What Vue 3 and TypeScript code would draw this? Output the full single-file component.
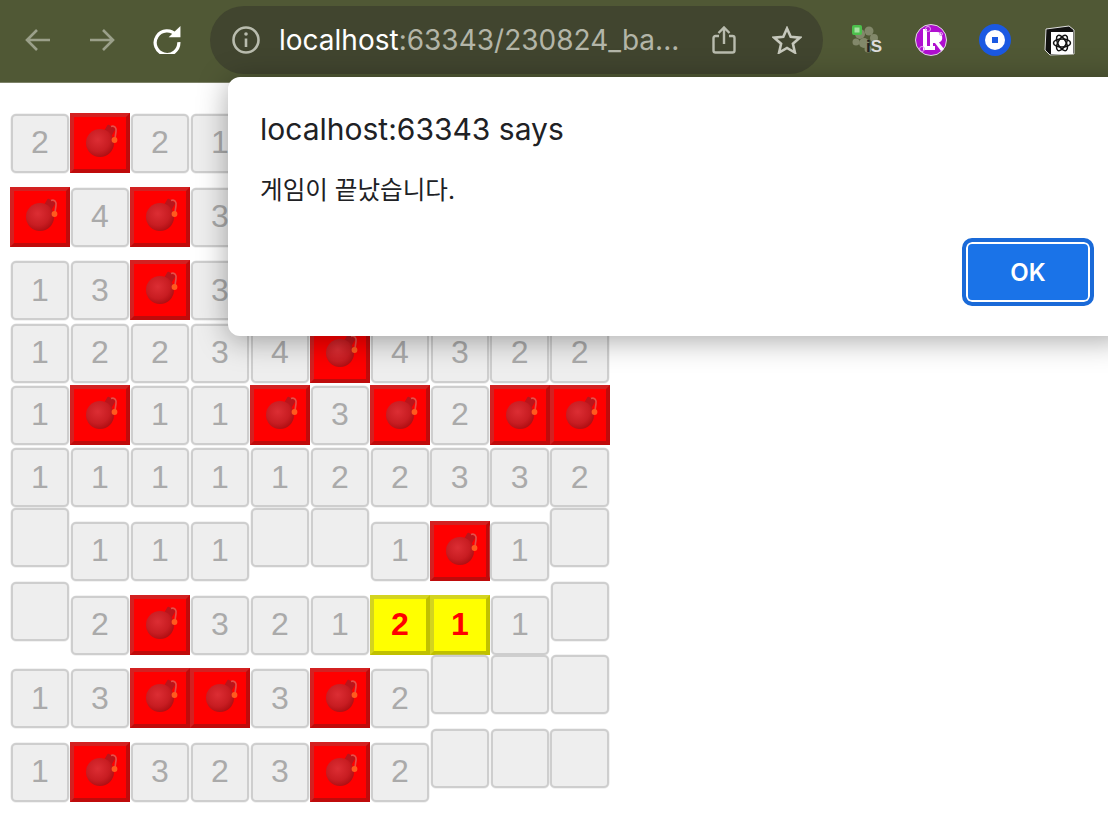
<template>
  <div class="page">
    <header class="toolbar">
      <nav class="nav">
        <svg class="nav-icon nav-icon--off" viewBox="0 0 26 26"><path d="M25 13H2M12 3 2 13l10 10" /></svg>
        <svg class="nav-icon nav-icon--off" viewBox="0 0 26 26"><path d="M1 13h23M14 3l10 10-10 10" /></svg>
        <svg class="nav-icon nav-icon--reload" viewBox="0 0 26 26">
          <path d="M21.5 8.5A11 11 0 1 0 24 15" />
          <path class="solid" d="M14.5 10.500 25.500 0v10.500z" />
        </svg>
      </nav>
      <div class="omnibox">
        <svg class="info" viewBox="0 0 28 28">
          <circle cx="14" cy="14" r="12.5" />
          <path d="M14 12.5V21" />
          <circle class="solid" cx="14" cy="8" r="1.8" />
        </svg>
        <span class="url"><b>localhost</b>:63343/230824_ba...</span>
        <svg class="share" viewBox="0 0 24 28">
          <path d="M7 10H3.5A2 2 0 0 0 1.500 12v12.500a2 2 0 0 0 2 2h17a2 2 0 0 0 2-2V12a2 2 0 0 0-2-2H17" />
          <path d="M12 18V2M6.500 7 12 1.500 17.500 7" />
        </svg>
        <svg class="star" viewBox="0 0 30 28">
          <path d="M15 2.500 18.700 10.800l9 .9-6.800 6 2 8.800L15 21.900l-7.900 4.600 2-8.800-6.800-6 9-.9z" />
        </svg>
      </div>
      <div class="extensions">
        <svg class="ext" viewBox="0 0 32 32">
          <g fill="#8f9478" opacity="0.8">
            <circle cx="9" cy="10" r="5" />
            <circle cx="18" cy="7" r="4.500" />
            <circle cx="23" cy="14" r="4" />
            <circle cx="13" cy="19" r="5" />
            <circle cx="5" cy="18" r="3.500" />
            <circle cx="17" cy="25" r="3.500" />
          </g>
          <rect x="1" y="1" width="10" height="10" rx="2" fill="#4cc04c" />
          <rect x="3.500" y="3.500" width="5" height="5" fill="#a6e0a0" />
          <text x="15" y="28" class="ext-text"><tspan class="ext-dark">i</tspan>S</text>
        </svg>
        <svg class="ext" viewBox="0 0 32 32">
          <circle cx="16" cy="16" r="15.500" fill="#b00fd0" stroke="#ddd" />
          <path d="M8 5h4v17h8v4H8z" fill="#fff" />
          <path d="M15 8h7a5.500 5.500 0 0 1 2 10.500L29 25l-3 2-6-8h-2v3h-3z" fill="#fff" />
          <g fill="none" stroke="#e0a0f0">
            <circle cx="7" cy="25" r="2.500" />
            <circle cx="13" cy="5" r="2.500" />
            <circle cx="26" cy="10" r="1.500" />
          </g>
        </svg>
        <svg class="ext" viewBox="0 0 32 32">
          <circle cx="16" cy="16" r="16" fill="#1b59e2" />
          <circle cx="16" cy="16" r="10" fill="#fff" />
          <rect x="13" y="13" width="6" height="6" fill="#1b59e2" />
        </svg>
        <svg class="ext" viewBox="0 0 32 32">
          <path d="M3 5 26 2l5 4v24l-24 1-5-5z" fill="#111" stroke="#ddd" />
          <rect x="8" y="8" width="22" height="22" fill="#fff" />
          <g fill="none" stroke="#111" stroke-width="1.500">
            <ellipse cx="19" cy="19" rx="8.500" ry="4" />
            <ellipse cx="19" cy="19" rx="8.500" ry="4" transform="rotate(60 19 19)" />
            <ellipse cx="19" cy="19" rx="8.500" ry="4" transform="rotate(120 19 19)" />
          </g>
        </svg>
      </div>
    </header>

    <main class="board">
      <div v-for="(row, r) in rows" :key="r" class="row" :class="{ 'row--tall': row.includes('_') }">
        <div v-for="(value, c) in row" :key="c" class="cell" :class="cellClass(value)">
          <svg v-if="value === '*'" class="bomb" viewBox="4 4 52 52">
            <defs>
              <radialGradient :id="`shine-${r}-${c}`" cx="0.42" cy="0.38" r="0.65">
                <stop offset="0" stop-color="#dc2e34" />
                <stop offset="0.65" stop-color="#c81d22" />
                <stop offset="1" stop-color="#ad0e12" />
              </radialGradient>
            </defs>
            <rect x="35" y="13" width="9" height="9" rx="1" transform="rotate(30 39.500 17.500)" fill="#b9151b" />
            <circle cx="30" cy="30" r="14" :fill="`url(#shine-${r}-${c})`" />
            <path d="M41 13.500c4-1.500 5.500 2 5 5s-.8 5-1 8" fill="none" stroke="#e2504a" stroke-width="1.600" />
            <circle cx="44.500" cy="27" r="2.900" fill="#ff5a1e" />
          </svg>
          <template v-else-if="value !== '_'">{{ value.replace('!', '') }}</template>
        </div>
      </div>
    </main>

    <section class="dialog">
      <h1 class="dialog-title">localhost:63343 says</h1>
      <p class="dialog-text">게임이 끝났습니다.</p>
      <div class="dialog-actions">
        <button class="dialog-ok">OK</button>
      </div>
    </section>
  </div>
</template>

<script setup lang="ts">
// '*' bomb, '_' still closed, '!' the clicked cells
const rows: string[][] = [
  ['2', '*', '2', '1', '_', '_', '_', '_', '_', '_'],
  ['*', '4', '*', '3', '1', '_', '_', '_', '_', '_'],
  ['1', '3', '*', '3', '2', '1', '1', '_', '_', '_'],
  ['1', '2', '2', '3', '4', '*', '4', '3', '2', '2'],
  ['1', '*', '1', '1', '*', '3', '*', '2', '*', '*'],
  ['1', '1', '1', '1', '1', '2', '2', '3', '3', '2'],
  ['_', '1', '1', '1', '_', '_', '1', '*', '1', '_'],
  ['_', '2', '*', '3', '2', '1', '2!', '1!', '1', '_'],
  ['1', '3', '*', '*', '3', '*', '2', '_', '_', '_'],
  ['1', '*', '3', '2', '3', '*', '2', '_', '_', '_'],
];

const cellClass = (value: string): string => {
  if (value === '*') return 'cell--bomb';
  if (value === '_') return 'cell--closed';
  if (value.endsWith('!')) return 'cell--hit';
  return 'cell--number';
};
</script>

<style>
html,
body {
  margin: 0;
  background: #fff;
}
</style>

<style scoped>
.page {
  position: relative;
  width: 1108px;
  height: 834px;
  overflow: hidden;
  background: #fff;
  font-family: "Liberation Sans", Arial, sans-serif;
}

.toolbar {
  display: flex;
  align-items: flex-start;
  box-sizing: border-box;
  height: 83px;
  padding: 6px 0 0 25px;
  background: #505835;
  border-bottom: 1px solid #7d8268;
}

.nav {
  display: flex;
  gap: 38px;
  width: 185px;
  padding-top: 21px;
}

.nav-icon {
  width: 26px;
  height: 26px;
  fill: none;
  stroke: #fff;
  stroke-width: 2.600;
}

.nav-icon--reload {
  width: 28px;
  height: 28px;
  margin-top: -1px;
  stroke-width: 3;
}

.nav-icon .solid {
  fill: #fff;
  stroke: none;
}

.nav-icon--off {
  stroke: #9ba08a;
}

.omnibox {
  display: flex;
  align-items: center;
  box-sizing: border-box;
  width: 613px;
  height: 68px;
  padding: 0 21px 0 22px;
  border-radius: 34px;
  background: #41452f;
}

.info {
  width: 28px;
  height: 28px;
  fill: none;
  stroke: #b9bcae;
  stroke-width: 2.600;
}

.info .solid {
  fill: #b9bcae;
  stroke: none;
}

.url {
  margin-left: 19px;
  flex: 1;
  font-family: Inter, sans-serif;
  font-size: 28px;
  color: #b3b5a8;
  white-space: nowrap;
}

.url b {
  font-weight: 400;
  color: #fff;
}

.share {
  width: 24px;
  height: 28px;
  margin-right: 36px;
  fill: none;
  stroke: #b9bcae;
  stroke-width: 2.400;
}

.star {
  width: 30px;
  height: 28px;
  fill: none;
  stroke: #c6c8bc;
  stroke-width: 2.600;
}

.extensions {
  display: flex;
  gap: 32px;
  margin-left: 28px;
  padding-top: 18px;
}

.ext {
  width: 32px;
  height: 32px;
}

.ext-text {
  font-family: "Liberation Sans", sans-serif;
  font-size: 17px;
  font-weight: 700;
  fill: #ddd;
}

.ext-dark {
  fill: #222;
}

.board {
  padding: 16.330px 0 0 10px;
}

.row {
  display: flex;
  align-items: flex-end;
  height: 62.330px;
}

.row--tall {
  height: 73.670px;
}

.cell {
  display: flex;
  flex: none;
  align-items: center;
  justify-content: center;
  box-sizing: border-box;
  width: 60px;
  height: 60px;
  padding-bottom: 2px;
  font-size: 32px;
  line-height: 1;
}

.cell--number,
.cell--closed {
  width: 58.600px;
  height: 59px;
  margin: 0 0.700px;
  border: 2px solid #cecece;
  border-radius: 5px;
  background: #eee;
  box-shadow: 0 0 0 0.500px rgba(206, 206, 206, 0.5);
  color: #aaa;
}

.cell--closed {
  margin-bottom: 14px;
}

.cell--bomb {
  padding-bottom: 0;
  border: 4px solid;
  border-color: #d32121 #bf0b0b #bf0b0b #d32121;
  background: #f00;
}

.cell--hit {
  border: 4px solid;
  border-color: #d4d420 #c0c000 #c0c000 #d4d420;
  background: #ff0;
  color: #f00;
  font-weight: 700;
}

.bomb {
  width: 52px;
  height: 52px;
}

.dialog {
  position: absolute;
  top: 77px;
  left: 228px;
  box-sizing: border-box;
  width: 900px;
  height: 259px;
  padding: 32px 34px 0 32px;
  border-radius: 12px;
  background: #fff;
  box-shadow: 0 4px 30px rgba(0, 0, 0, 0.35);
  color: #202124;
}

.dialog-title {
  margin: 0;
  font-family: Inter, sans-serif;
  font-size: 30px;
  font-weight: 400;
  line-height: 40px;
}

.dialog-text {
  margin: 24px 0 0;
  font-family: Inter, "Noto Sans CJK KR", sans-serif;
  font-size: 24.600px;
  line-height: 34px;
}

.dialog-actions {
  display: flex;
  justify-content: flex-end;
  margin-top: 31px;
}

.dialog-ok {
  box-sizing: border-box;
  width: 132px;
  height: 68px;
  padding: 0;
  border: 4px solid #1a6ad8;
  border-radius: 10px;
  background: #1a73e8;
  box-shadow: inset 0 0 0 2px #fff;
  color: #fff;
  font-family: Inter, sans-serif;
  font-size: 24px;
  font-weight: 600;
}
</style>
